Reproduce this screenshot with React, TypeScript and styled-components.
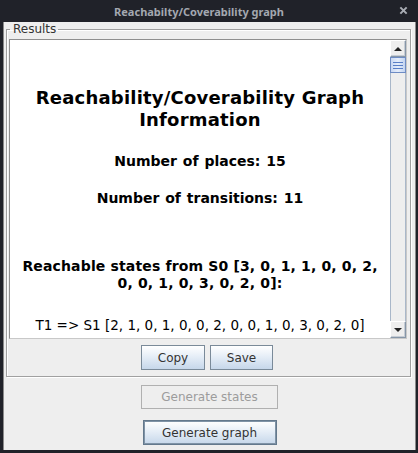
import React from "react";
import styled, { createGlobalStyle } from "styled-components";

const GlobalStyle = createGlobalStyle`
  html, body {
    margin: 0;
    padding: 0;
    background: #202229;
  }
`;

export default function App() {
  return (
    <>
      <GlobalStyle />
      <Window>
        <TitleBar>
          <TitleText>Reachabilty/Coverability graph</TitleText>
          <CloseIcon viewBox="0 0 10 10">
            <path d="M1.5 1.5 L8.5 8.5 M8.5 1.5 L1.5 8.5" />
          </CloseIcon>
        </TitleBar>

        <Content>
          <ResultsBox>
            <ResultsLegend>Results</ResultsLegend>
            <ScrollPane>
              <TextArea>
                <Heading>Reachability/Coverability Graph Information</Heading>
                <InfoLine $top={22} $words={1}>Number of places: 15</InfoLine>
                <InfoLine $top={20} $words={1}>Number of transitions: 11</InfoLine>
                <InfoLine $top={51} $spacing={0.15}>
                  Reachable states from S0 [3, 0, 1, 1, 0, 0, 2, 0, 0, 1, 0, 3, 0, 2, 0]:
                </InfoLine>
                <StateLine>T1 =&gt; S1 [2, 1, 0, 1, 0, 0, 2, 0, 0, 1, 0, 3, 0, 2, 0]</StateLine>
              </TextArea>
              <ScrollBar>
                <ArrowButton>
                  <Arrow viewBox="0 0 8 4"><path d="M0 4 L4 0 L8 4 Z" /></Arrow>
                </ArrowButton>
                <Thumb>
                  <Grip />
                  <Grip />
                  <Grip />
                </Thumb>
                <Track />
                <ArrowButton>
                  <Arrow viewBox="0 0 8 4"><path d="M0 0 L8 0 L4 4 Z" /></Arrow>
                </ArrowButton>
              </ScrollBar>
            </ScrollPane>
            <ButtonRow>
              <Button $width={64}>Copy</Button>
              <Button $width={63}>Save</Button>
            </ButtonRow>
          </ResultsBox>

          <Button $width={137} $height={24} $top={8} disabled>Generate states</Button>
          <Button $width={134} $top={11} $default>Generate graph</Button>
        </Content>
      </Window>
    </>
  );
}

const Window = styled.div`
  width: 418px;
  height: 453px;
  display: flex;
  flex-direction: column;
  background: #202229;
  font-family: "DejaVu Sans", sans-serif;
`;

const TitleBar = styled.div`
  height: 22px;
  display: flex;
  align-items: center;
  justify-content: center;
  position: relative;
`;

const TitleText = styled.span`
  font-family: "Noto Sans", "DejaVu Sans", sans-serif;
  font-size: 11px;
  font-weight: 700;
  color: #a3a8b0;
  margin-left: -20px;
`;

const CloseIcon = styled.svg`
  position: absolute;
  right: 10px;
  top: 6px;
  width: 9px;
  height: 9px;
  stroke: #a9adb4;
  stroke-width: 2.2;
  fill: none;
`;

const Content = styled.div`
  flex: 1;
  margin: 0 2px 3px 3px;
  background: #eeeeee;
  border-left: 1px solid #8a8a8a;
  border-right: 1px solid #8a8a8a;
  display: flex;
  flex-direction: column;
  align-items: center;
`;

const ResultsBox = styled.fieldset`
  align-self: stretch;
  margin: 0 4px 0 2px;
  padding: 3px 3px 6px 2px;
  border: 1px solid #a0a0a0;
  box-shadow: 1px 1px 0 #ffffff, inset 1px 1px 0 #ffffff;
  min-width: 0;
  display: flex;
  flex-direction: column;
`;

const ResultsLegend = styled.legend`
  font-size: 12px;
  line-height: 14px;
  color: #333333;
  padding: 0 2px 0 3px;
  margin-left: 1px;
`;

const ScrollPane = styled.div`
  height: 298px;
  display: flex;
  border: 1px solid #8e8e8e;
  border-right-color: #c8c8c8;
  border-bottom-color: #c8c8c8;
  background: #ffffff;
`;

const TextArea = styled.div`
  flex: 1;
  overflow: hidden;
  padding: 47px 10px 0 10px;
  text-align: center;
  color: #000000;
  font-weight: 700;
`;

const Heading = styled.div`
  font-size: 18px;
  line-height: 22px;
  letter-spacing: 0.2px;
`;

const InfoLine = styled.div<{ $top: number; $spacing?: number; $words?: number }>`
  font-size: 14px;
  line-height: 17px;
  margin-top: ${(p) => p.$top}px;
  letter-spacing: ${(p) => p.$spacing ?? 0}px;
  word-spacing: ${(p) => p.$words ?? 0}px;
`;

const StateLine = styled.div`
  font-size: 13.5px;
  line-height: 17px;
  font-weight: 400;
  margin-top: 25px;
  white-space: nowrap;
`;

const ScrollBar = styled.div`
  width: 16px;
  display: flex;
  flex-direction: column;
  background: #eeeeee;
`;

const ArrowButton = styled.div`
  height: 15px;
  border: 1px solid #8696a8;
  border-top-color: #ffffff;
  border-left-color: #ffffff;
  box-shadow: inset -1px -1px 0 #c6ccd4;
  display: flex;
  align-items: center;
  justify-content: center;
  background: #eeeeee;
`;

const Arrow = styled.svg`
  width: 8px;
  height: 4px;
  fill: #222222;
`;

const Thumb = styled.div`
  height: 14px;
  border: 1px solid #6e8cc4;
  background: linear-gradient(90deg, #c9d8f3, #e6eefb 50%, #c2d3f0);
  display: flex;
  flex-direction: column;
  align-items: center;
  justify-content: center;
  gap: 2px;
`;

const Grip = styled.div`
  width: 10px;
  height: 1px;
  background: #5a7fc7;
`;

const Track = styled.div`
  flex: 1;
  border-left: 1px solid #a9b7c9;
  border-right: 1px solid #a9b7c9;
`;

const ButtonRow = styled.div`
  display: flex;
  justify-content: center;
  gap: 5px;
  margin-top: 6px;
  padding-right: 2px;
`;

const Button = styled.button<{ $width: number; $height?: number; $top?: number; $default?: boolean }>`
  width: ${(p) => p.$width}px;
  height: ${(p) => p.$height ?? 25}px;
  margin-top: ${(p) => p.$top ?? 0}px;
  padding: 0;
  font-family: "DejaVu Sans", sans-serif;
  font-size: 12px;
  color: #333333;
  border: 1px solid #7a8a99;
  border-radius: 0;
  background: linear-gradient(180deg, #ffffff 0%, #e6eef7 45%, #c6d7ea 100%);
  box-shadow: ${(p) => (p.$default ? "inset 0 0 0 1px #7f93a6" : "none")};
  ${(p) => p.$default && "border-color: #63788c;"}

  &:disabled {
    background: #eeeeee;
    border-color: #b0b0b0;
    color: #9c9c9c;
  }
`;
